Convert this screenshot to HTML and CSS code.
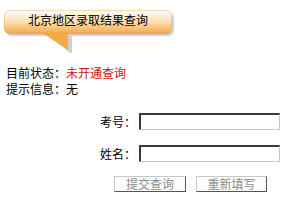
FILE: index.html
```html
<!DOCTYPE html>
<html>
<head>
<meta charset="utf-8">
<link rel="stylesheet" href="styles.css">
</head>
<body>
<div class="bubble">
  <span class="bubble-text">北京地区录取结果查询</span>
  <svg class="tail" width="30" height="22" viewBox="0 0 30 22">
    <polygon points="3,0 28,0 28,19 26,19" fill="#d0d0d0"/>
    <polygon points="0,0 24,0 24,16" fill="#f4ab48"/>
  </svg>
</div>
<div class="status">
  <div>目前状态：<span class="red">未开通查询</span></div>
  <div>提示信息：无</div>
</div>
<div class="form">
  <label class="lbl">考号：</label><span class="inp"></span>
  <label class="lbl">姓名：</label><span class="inp"></span>
</div>
<div class="buttons">
  <span class="btn w72">提交查询</span>
  <span class="btn w71">重新填写</span>
</div>
</body>
</html>
```
FILE: styles.css
```css
html, body {
  margin: 0;
  padding: 0;
  background: #fff;
  font-family: "Noto Sans CJK SC", "Liberation Sans", sans-serif;
  font-size: 12px;
  color: #000;
}
.bubble {
  position: relative;
  margin: 10px 0 0 4px;
  width: 168px;
  height: 24px;
  border-radius: 6px;
  background: linear-gradient(#fffdf8 0%, #fde3b8 45%, #f4a842 100%);
  box-shadow: 2px 2px 1px #cfcfcf, inset 0 0 0 1px rgba(230,150,60,0.35);
  text-align: center;
  box-sizing: border-box;
  padding-top: 2px;
  line-height: 16px;
}
.tail {
  position: absolute;
  left: 40px;
  top: 24px;
}
.status {
  margin-top: 31px;
  padding-left: 6px;
  line-height: 16px;
}
.red { color: #cc1111; }
.form {
  margin: 16px 0 0 100px;
  display: grid;
  grid-template-columns: 36px 141px;
  column-gap: 3px;
  row-gap: 15px;
  align-items: center;
}
.lbl { line-height: 17px; }
.inp {
  display: block;
  height: 17px;
  box-sizing: border-box;
  background: #fff;
  border-top: 2px solid #3a3a3a;
  border-left: 2px solid #3a3a3a;
  border-right: 1px solid #c4c4c4;
  border-bottom: 1px solid #c4c4c4;
}
.buttons {
  margin-top: 14px;
  padding-left: 114px;
  display: flex;
  gap: 10px;
}
.btn {
  display: block;
  height: 16px;
  box-sizing: border-box;
  border-top: 1px solid #c8c8c8;
  border-left: 1px solid #c8c8c8;
  border-right: 1px solid #555;
  border-bottom: 1px solid #555;
  background: #fff;
  color: #8a8a8a;
  text-align: center;
  line-height: 14px;
}
.w72 { width: 72px; }
.w71 { width: 71px; }
```
